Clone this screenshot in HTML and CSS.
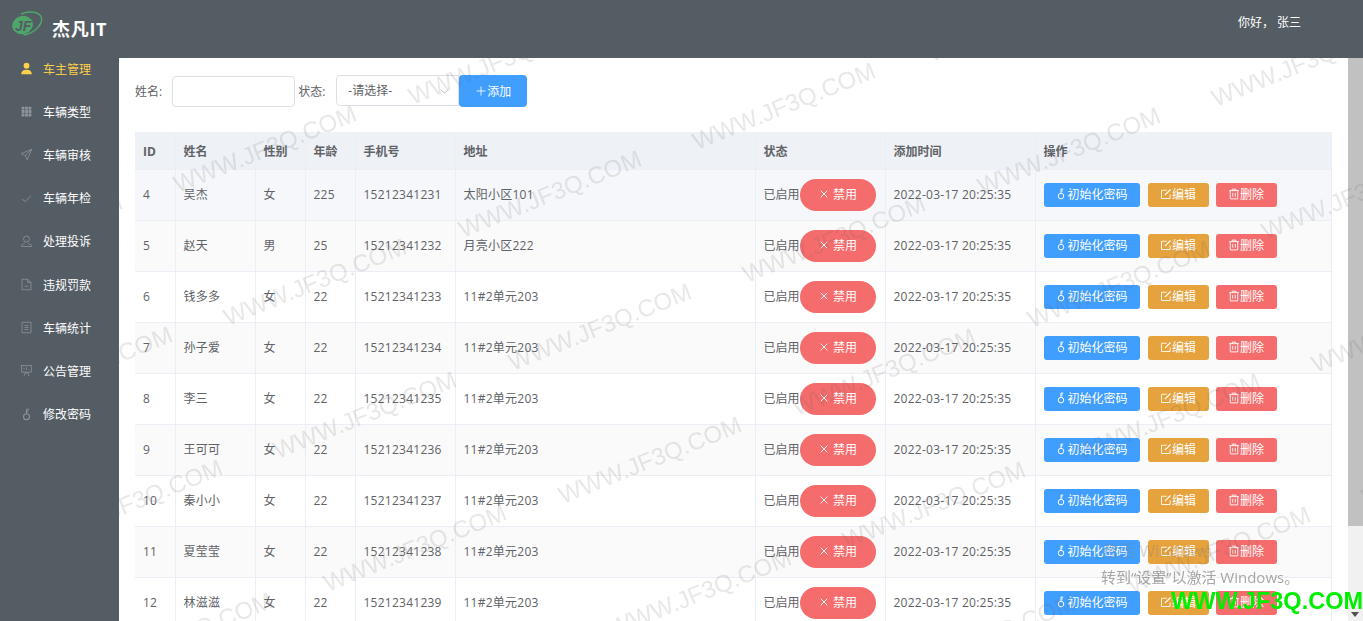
FILE: index.html
```html
<!DOCTYPE html>
<html>
<head>
	<meta charset="utf-8">
	<title>车主管理</title>
	<link rel="stylesheet" href="styles.css">
</head>
<body>
	<svg class="defs" width="0" height="0">
		<symbol id="i-user-solid" viewBox="0 0 16 16"><circle cx="8" cy="4.600" r="3.600" fill="currentColor"/><path d="M1.500 15c0-3.600 2.600-5.400 6.500-5.400s6.500 1.800 6.500 5.400z" fill="currentColor"/></symbol>
		<symbol id="i-grid" viewBox="0 0 16 16"><path d="M2 2h3.500v3.500H2zM6.300 2h3.500v3.500H6.300zM10.500 2H14v3.500h-3.500zM2 6.300h3.500v3.500H2zM6.300 6.300h3.500v3.500H6.300zM10.500 6.300H14v3.500h-3.500zM2 10.500h3.500V14H2zM6.300 10.500h3.500V14H6.300zM10.500 10.500H14V14h-3.500z" fill="currentColor"/></symbol>
		<symbol id="i-send" viewBox="0 0 16 16"><path d="M14.500 1.500 1.500 7l5 2.200 2.300 5.300zM6.500 9.200 14.500 1.500" fill="none" stroke="currentColor"/></symbol>
		<symbol id="i-check" viewBox="0 0 16 16"><path d="M2.500 8.500 6.300 12l7.200-7.500" fill="none" stroke="currentColor" stroke-width="1.100"/></symbol>
		<symbol id="i-user" viewBox="0 0 16 16"><circle cx="8" cy="5" r="3.700" fill="none" stroke="currentColor"/><path d="M6 9.500c-.3 1.500-2 1.800-4 2.700v2h12v-2c-2-.9-3.700-1.200-4-2.700" fill="none" stroke="currentColor"/></symbol>
		<symbol id="i-doc-minus" viewBox="0 0 16 16"><path d="M2.500 1.500h7l4 4v9h-11zM9.500 1.500v4h4M5.500 10h5" fill="none" stroke="currentColor"/></symbol>
		<symbol id="i-doc" viewBox="0 0 16 16"><path d="M2.500 1.500h11v13h-11zM5.500 5.500h5M5.500 8h5M5.500 10.500h5" fill="none" stroke="currentColor"/></symbol>
		<symbol id="i-board" viewBox="0 0 16 16"><path d="M1 2h14M2 2v8h12V2M8 10v2M5 15l1.500-5M11 15l-1.500-5M5 7V5M8 7V4M11 7V6" fill="none" stroke="currentColor"/></symbol>
		<symbol id="i-key" viewBox="0 0 16 16"><circle cx="8" cy="10.800" r="3.700" fill="none" stroke="currentColor" stroke-width="1.300"/><path d="M8 7V1.200M8 1.500h3M8 4h2.200" fill="none" stroke="currentColor" stroke-width="1.300"/></symbol>
		<symbol id="i-edit" viewBox="0 0 16 16"><path d="M13.500 8.500v5.500h-11.500V3h7" fill="none" stroke="currentColor" stroke-width="1.200"/><path d="M6.500 9.500 14 2" fill="none" stroke="currentColor" stroke-width="1.600"/></symbol>
		<symbol id="i-trash" viewBox="0 0 16 16"><path d="M1.500 3.500h13M5.500 3.500V1.500h5v2M3 3.500v11h10v-11M6.300 6.500v5M9.700 6.500v5" fill="none" stroke="currentColor" stroke-width="1.200"/></symbol>
		<symbol id="i-close" viewBox="0 0 16 16"><path d="M3.500 3.500l9 9M12.500 3.500l-9 9" fill="none" stroke="currentColor" stroke-width="1.200"/></symbol>
		<symbol id="i-plus" viewBox="0 0 16 16"><path d="M8 2v12M2 8h12" fill="none" stroke="currentColor" stroke-width="1.100"/></symbol>
		<symbol id="i-down" viewBox="0 0 16 16"><path d="M3 5.500l5 5 5-5" fill="none" stroke="currentColor" stroke-width="1.400"/></symbol>
	</svg>

	<div class="app">
		<div class="side">
			<div class="logo">
				<svg class="logo-mark" viewBox="0 0 32 26" width="32" height="26">
					<ellipse cx="11.500" cy="14" rx="10.500" ry="9" fill="#4fa66a" transform="rotate(-18 11.500 14)"/>
					<path d="M10 3C18 -.5 29 .5 30.500 7c1 6-6 15-18 17" fill="none" stroke="#4fa66a" stroke-width="1.400"/>
					<text x="4" y="20" class="logo-jf">JF</text>
				</svg>
				<span class="logo-name">杰凡IT</span>
			</div>
			<ul class="menu">
				<li class="active"><svg class="menu-icon"><use href="#i-user-solid"/></svg>车主管理</li>
				<li><svg class="menu-icon"><use href="#i-grid"/></svg>车辆类型</li>
				<li><svg class="menu-icon"><use href="#i-send"/></svg>车辆审核</li>
				<li><svg class="menu-icon"><use href="#i-check"/></svg>车辆年检</li>
				<li><svg class="menu-icon"><use href="#i-user"/></svg>处理投诉</li>
				<li><svg class="menu-icon"><use href="#i-doc-minus"/></svg>违规罚款</li>
				<li><svg class="menu-icon"><use href="#i-doc"/></svg>车辆统计</li>
				<li><svg class="menu-icon"><use href="#i-board"/></svg>公告管理</li>
				<li><svg class="menu-icon"><use href="#i-key"/></svg>修改密码</li>
			</ul>
		</div>

		<div class="right">
			<div class="topbar">你好， 张三</div>
			<div class="body-row">
				<div class="main">
					<div class="search">
						<label>姓名:</label>
						<div class="input"></div>
						<label>状态:</label>
						<div class="select">-请选择-<svg class="select-arrow"><use href="#i-down"/></svg></div>
						<button class="add-btn"><svg class="add-icon"><use href="#i-plus"/></svg>添加</button>
					</div>

					<table class="grid">
						<colgroup>
							<col class="c-id"><col class="c-name"><col class="c-sex"><col class="c-age"><col class="c-phone"><col class="c-addr"><col class="c-state"><col class="c-time"><col class="c-ops">
						</colgroup>
						<tr><th>ID</th><th>姓名</th><th>性别</th><th>年龄</th><th>手机号</th><th>地址</th><th>状态</th><th>添加时间</th><th>操作</th></tr>
						<tr class="hover">
							<td>4</td><td>吴杰</td><td>女</td><td>225</td><td>15212341231</td><td>太阳小区101</td>
							<td class="btn-cell"><div class="state"><span>已启用</span><button class="pill"><svg class="btn-icon"><use href="#i-close"/></svg>禁用</button></div></td>
							<td>2022-03-17 20:25:35</td>
							<td class="btn-cell"><div class="ops"><button class="op blue"><svg class="btn-icon"><use href="#i-key"/></svg>初始化密码</button><button class="op orange"><svg class="btn-icon"><use href="#i-edit"/></svg>编辑</button><button class="op red"><svg class="btn-icon"><use href="#i-trash"/></svg>删除</button></div></td>
						</tr>
						<tr class="stripe">
							<td>5</td><td>赵天</td><td>男</td><td>25</td><td>15212341232</td><td>月亮小区222</td>
							<td class="btn-cell"><div class="state"><span>已启用</span><button class="pill"><svg class="btn-icon"><use href="#i-close"/></svg>禁用</button></div></td>
							<td>2022-03-17 20:25:35</td>
							<td class="btn-cell"><div class="ops"><button class="op blue"><svg class="btn-icon"><use href="#i-key"/></svg>初始化密码</button><button class="op orange"><svg class="btn-icon"><use href="#i-edit"/></svg>编辑</button><button class="op red"><svg class="btn-icon"><use href="#i-trash"/></svg>删除</button></div></td>
						</tr>
						<tr>
							<td>6</td><td>钱多多</td><td>女</td><td>22</td><td>15212341233</td><td>11#2单元203</td>
							<td class="btn-cell"><div class="state"><span>已启用</span><button class="pill"><svg class="btn-icon"><use href="#i-close"/></svg>禁用</button></div></td>
							<td>2022-03-17 20:25:35</td>
							<td class="btn-cell"><div class="ops"><button class="op blue"><svg class="btn-icon"><use href="#i-key"/></svg>初始化密码</button><button class="op orange"><svg class="btn-icon"><use href="#i-edit"/></svg>编辑</button><button class="op red"><svg class="btn-icon"><use href="#i-trash"/></svg>删除</button></div></td>
						</tr>
						<tr class="stripe">
							<td>7</td><td>孙子爱</td><td>女</td><td>22</td><td>15212341234</td><td>11#2单元203</td>
							<td class="btn-cell"><div class="state"><span>已启用</span><button class="pill"><svg class="btn-icon"><use href="#i-close"/></svg>禁用</button></div></td>
							<td>2022-03-17 20:25:35</td>
							<td class="btn-cell"><div class="ops"><button class="op blue"><svg class="btn-icon"><use href="#i-key"/></svg>初始化密码</button><button class="op orange"><svg class="btn-icon"><use href="#i-edit"/></svg>编辑</button><button class="op red"><svg class="btn-icon"><use href="#i-trash"/></svg>删除</button></div></td>
						</tr>
						<tr>
							<td>8</td><td>李三</td><td>女</td><td>22</td><td>15212341235</td><td>11#2单元203</td>
							<td class="btn-cell"><div class="state"><span>已启用</span><button class="pill"><svg class="btn-icon"><use href="#i-close"/></svg>禁用</button></div></td>
							<td>2022-03-17 20:25:35</td>
							<td class="btn-cell"><div class="ops"><button class="op blue"><svg class="btn-icon"><use href="#i-key"/></svg>初始化密码</button><button class="op orange"><svg class="btn-icon"><use href="#i-edit"/></svg>编辑</button><button class="op red"><svg class="btn-icon"><use href="#i-trash"/></svg>删除</button></div></td>
						</tr>
						<tr class="stripe">
							<td>9</td><td>王可可</td><td>女</td><td>22</td><td>15212341236</td><td>11#2单元203</td>
							<td class="btn-cell"><div class="state"><span>已启用</span><button class="pill"><svg class="btn-icon"><use href="#i-close"/></svg>禁用</button></div></td>
							<td>2022-03-17 20:25:35</td>
							<td class="btn-cell"><div class="ops"><button class="op blue"><svg class="btn-icon"><use href="#i-key"/></svg>初始化密码</button><button class="op orange"><svg class="btn-icon"><use href="#i-edit"/></svg>编辑</button><button class="op red"><svg class="btn-icon"><use href="#i-trash"/></svg>删除</button></div></td>
						</tr>
						<tr>
							<td>10</td><td>秦小小</td><td>女</td><td>22</td><td>15212341237</td><td>11#2单元203</td>
							<td class="btn-cell"><div class="state"><span>已启用</span><button class="pill"><svg class="btn-icon"><use href="#i-close"/></svg>禁用</button></div></td>
							<td>2022-03-17 20:25:35</td>
							<td class="btn-cell"><div class="ops"><button class="op blue"><svg class="btn-icon"><use href="#i-key"/></svg>初始化密码</button><button class="op orange"><svg class="btn-icon"><use href="#i-edit"/></svg>编辑</button><button class="op red"><svg class="btn-icon"><use href="#i-trash"/></svg>删除</button></div></td>
						</tr>
						<tr class="stripe">
							<td>11</td><td>夏莹莹</td><td>女</td><td>22</td><td>15212341238</td><td>11#2单元203</td>
							<td class="btn-cell"><div class="state"><span>已启用</span><button class="pill"><svg class="btn-icon"><use href="#i-close"/></svg>禁用</button></div></td>
							<td>2022-03-17 20:25:35</td>
							<td class="btn-cell"><div class="ops"><button class="op blue"><svg class="btn-icon"><use href="#i-key"/></svg>初始化密码</button><button class="op orange"><svg class="btn-icon"><use href="#i-edit"/></svg>编辑</button><button class="op red"><svg class="btn-icon"><use href="#i-trash"/></svg>删除</button></div></td>
						</tr>
						<tr>
							<td>12</td><td>林滋滋</td><td>女</td><td>22</td><td>15212341239</td><td>11#2单元203</td>
							<td class="btn-cell"><div class="state"><span>已启用</span><button class="pill"><svg class="btn-icon"><use href="#i-close"/></svg>禁用</button></div></td>
							<td>2022-03-17 20:25:35</td>
							<td class="btn-cell"><div class="ops"><button class="op blue"><svg class="btn-icon"><use href="#i-key"/></svg>初始化密码</button><button class="op orange"><svg class="btn-icon"><use href="#i-edit"/></svg>编辑</button><button class="op red"><svg class="btn-icon"><use href="#i-trash"/></svg>删除</button></div></td>
						</tr>
					</table>
				</div>
				<div class="scrollbar">
					<div class="scroll-thumb"></div>
					<div class="scroll-arrow"></div>
				</div>
			</div>
		</div>
	</div>

	<div class="watermark" id="watermark"></div>
	<div class="activate">
		<div class="activate-title">激活 Windows</div>
		<div>转到“设置”以激活 Windows。</div>
	</div>
	<div class="site-mark">WWW.JF3Q.COM</div>

	<script src="script.js"></script>
</body>
</html>
```

FILE: styles.css
```css
* { box-sizing: border-box; }

html, body { height: 100%; }

body {
	margin: 0;
	overflow: hidden;
	font-family: "Open Sans", "Noto Sans CJK SC", sans-serif;
	font-size: 12px;
	color: #606266;
	background: #fff;
}

.defs { position: absolute; }

button { font-family: inherit; border: 0; padding: 0; color: #fff; }

.app { display: flex; height: 100vh; }

/* left column */
.side { width: 119px; flex: none; background: #545c64; }

.logo { display: flex; align-items: flex-start; height: 47px; padding: 11px 0 0 11px; }
.logo-mark { flex: none; }
.logo-jf { font: italic bold 14px "Liberation Sans", sans-serif; fill: #545c64; }
.logo-name { margin: 7px 0 0 9px; font-size: 18px; line-height: 22px; font-weight: 700; letter-spacing: .7px; color: #fff; white-space: nowrap; }

.menu { list-style: none; margin: 0; padding: 0; }
.menu li { display: flex; align-items: center; height: 43.2px; padding-left: 20px; color: #fff; }
.menu li.active { color: #ffd04b; }
.menu-icon { width: 13px; height: 13px; margin-right: 10px; color: #909399; flex: none; }
.menu li.active .menu-icon { color: #ffd04b; }

/* right column */
.right { flex: 1; min-width: 0; display: flex; flex-direction: column; }
.topbar { flex: none; height: 58px; padding: 14px 62px 0 0; text-align: right; line-height: 17px; color: #fff; background: #545c64; }
.body-row { flex: 1; min-height: 0; display: flex; }

.main { flex: 1; min-width: 0; overflow: hidden; padding: 17px 0 0 16px; background: #fff; }

.scrollbar { flex: none; width: 15px; display: flex; flex-direction: column; background: #f1f1f1; }
.scroll-thumb { height: 468px; background: #c1c1c1; }
.scroll-arrow { width: 0; height: 0; margin: auto 0 4px 3px; border: 4.5px solid transparent; border-top: 5px solid #505050; border-bottom: 0; }

/* search row */
.search { display: flex; align-items: center; height: 32px; margin-bottom: 25px; }
.search label { white-space: nowrap; }
.input { width: 123px; height: 31px; margin: 1px 3px 0 10px; border: 1px solid #dcdfe6; border-radius: 4px; background: #fff; }
.select { position: relative; width: 123px; height: 31px; margin: 0 0 1px 11px; padding-left: 11px; line-height: 29px; border: 1px solid #dcdfe6; border-radius: 4px 0 0 4px; color: #606266; }
.select-arrow { position: absolute; right: 8px; top: 10px; width: 11px; height: 11px; color: #b4b8c0; }
.add-btn { display: flex; align-items: center; justify-content: center; width: 68px; height: 32px; background: #409eff; border-radius: 4px; font-size: 12px; }
.add-icon { width: 12px; height: 12px; }

/* table */
.grid { width: 1196px; table-layout: fixed; border-collapse: collapse; }
.c-id { width: 40px; }
.c-name { width: 80px; }
.c-sex { width: 50px; }
.c-age { width: 50px; }
.c-phone { width: 100px; }
.c-addr { width: 300px; }
.c-state { width: 130px; }
.c-time { width: 150px; }
.c-ops { width: 296px; }

.grid th, .grid td { padding: 0 8px; text-align: left; border-right: 1px solid #ebeef5; border-bottom: 1px solid #ebeef5; white-space: nowrap; }
.grid th { height: 37px; padding-top: 2px; background: #eef1f6; font-weight: 700; color: #606266; }
.grid td { height: 51px; padding-bottom: 1px; letter-spacing: .25px; }
.grid td.btn-cell { padding-bottom: 0; letter-spacing: 0; }
.grid .hover td { background: #f5f7fa; }
.grid .stripe td { background: #fafafa; }

.state { display: flex; align-items: center; }
.state span { margin-bottom: 1px; }
.pill { display: flex; align-items: center; justify-content: center; width: 76px; height: 32px; padding-bottom: 1px; background: #f56c6c; border-radius: 16px; font-size: 12px; }
.pill .btn-icon { margin-right: 3px; }

.ops { display: flex; align-items: center; gap: 8px; }
.op { display: flex; align-items: center; justify-content: center; width: 61px; height: 24px; padding-bottom: 1px; border-radius: 3px; font-size: 12px; }
.op.blue { width: 96px; background: #409eff; }
.op.orange { background: #e6a23c; }
.op.red { background: #f56c6c; margin-left: -1px; }
.btn-icon { width: 12px; height: 12px; flex: none; }

/* overlays */
.watermark { position: fixed; inset: 0; overflow: hidden; pointer-events: none; }
.watermark span { position: absolute; width: 240px; height: 30px; margin: -15px 0 0 -120px; text-align: center; font: 24px/30px "Liberation Sans", sans-serif; color: rgba(100, 100, 100, .15); transform: rotate(-22deg); white-space: nowrap; }

.activate { position: fixed; left: 1101px; top: 537px; font-size: 15px; line-height: 27px; color: rgba(130, 130, 130, .7); white-space: nowrap; }
.activate-title { font-size: 17px; color: rgba(130, 130, 130, .3); }

.site-mark { position: fixed; right: 0; bottom: 5px; font: bold 23.500px/30px "Liberation Sans", sans-serif; color: #0e0; white-space: nowrap; }
```

FILE: script.js
```js
// repeat the site watermark over the window
var box = document.getElementById("watermark");
for (var row = -2; row < 5; row++) {
	for (var col = -2; col < 6; col++) {
		var x = 265 + col * 284.5 + row * 50;
		var y = 149 + col * 45 + row * 133;
		if (x < -120 || x > 1480 || y < -60 || y > 680) continue;
		var mark = document.createElement("span");
		mark.textContent = "WWW.JF3Q.COM";
		mark.style.left = x + "px";
		mark.style.top = y + "px";
		box.appendChild(mark);
	}
}
```
